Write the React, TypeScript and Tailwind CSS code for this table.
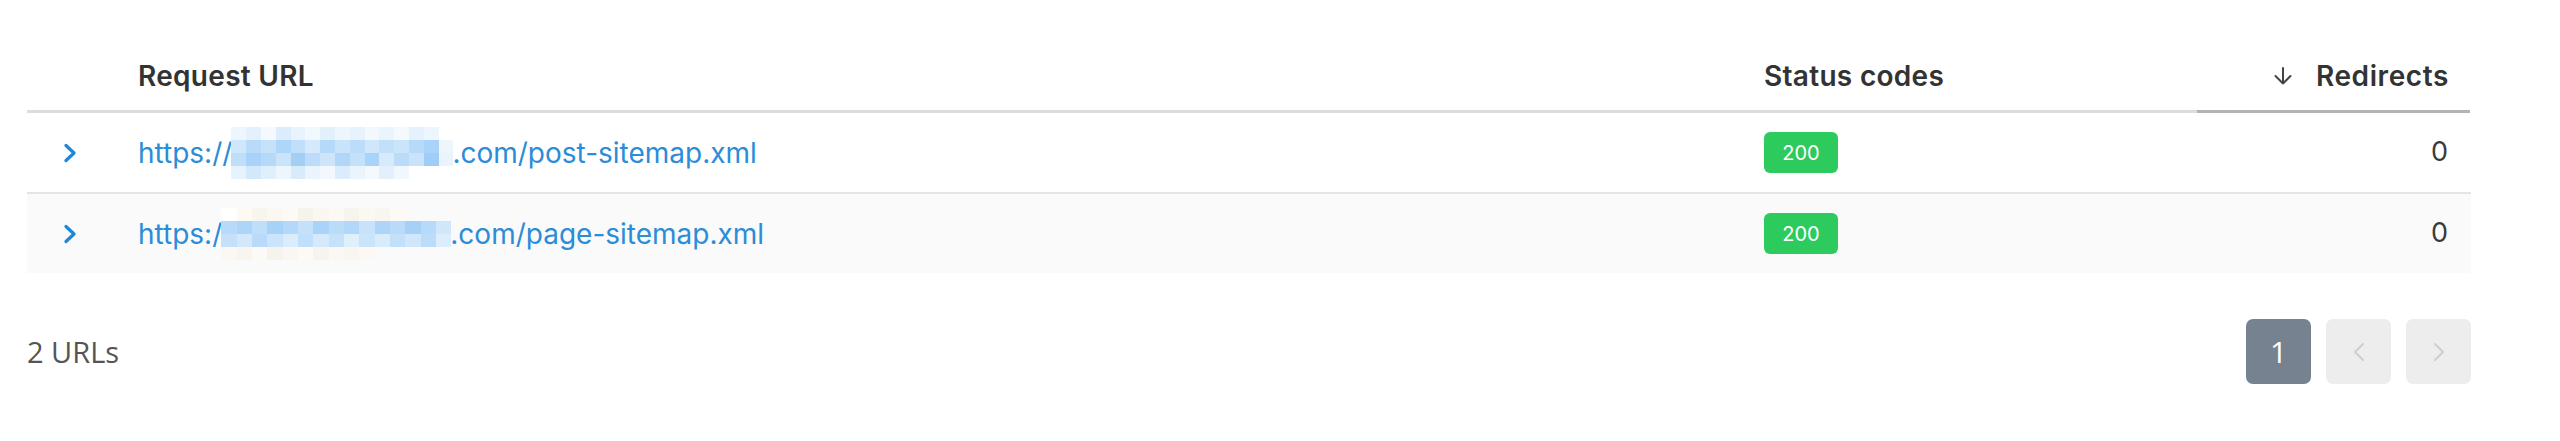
import React from "react";

const mosaic1 = [
  ["#eef6fd", "#e4f1fc", "#f3f9fe", "#dcecfb", "#e8f3fd", "#f1f8fe", "#e2f0fc", "#edf6fd", "#e6f2fc", "#f2f8fe", "#e9f4fd", "#f4f9fe", "#e5f1fc", "#eef6fd", "#ffffff"],
  ["#cfe6fb", "#b8dbf9", "#c6e1fa", "#aed6f8", "#c1dffa", "#d4e9fb", "#b4d9f9", "#c9e3fa", "#bcdcf9", "#d0e7fb", "#c3e0fa", "#cae4fa", "#b7daf9", "#a9d3f8", "#eef6fd"],
  ["#bfdefa", "#a8d2f8", "#b5d9f9", "#c8e3fa", "#a3cff7", "#bddcf9", "#cde5fb", "#b0d6f8", "#c4e1fa", "#aad3f8", "#d6eafb", "#bbdcf9", "#c9e3fa", "#9fcdf7", "#e9f4fd"],
  ["#e6f2fc", "#d2e8fb", "#e0effc", "#edf6fd", "#d8ebfb", "#e9f4fd", "#f2f8fe", "#dbedfc", "#eaf4fd", "#f4f9fe", "#e3f0fc", "#f0f7fd", "#ffffff", "#ffffff", "#ffffff"],
];

const mosaic2 = [
  ["#ffffff", "#fdf9f3", "#f8f4ee", "#fbf8f2", "#fdfaf5", "#f6f2ec", "#faf6f0", "#fcf9f4", "#f7f3ed", "#fbf8f3", "#f9f5ef", "#fdfaf6", "#fafafa", "#fafafa", "#fafafa"],
  ["#b7dafa", "#add5f9", "#bfdefa", "#a7d2f8", "#b3d8f9", "#c4e1fa", "#a9d3f8", "#bbdcf9", "#b1d7f9", "#c7e2fa", "#aed5f8", "#b9dbf9", "#a5d1f8", "#b6daf9", "#cfe6fb"],
  ["#c5e1fa", "#d3e8fb", "#b9dbf9", "#cbe4fa", "#dbedfc", "#c0dffa", "#d5e9fb", "#c6e2fa", "#dfeffc", "#cae4fa", "#d9ecfb", "#c2e0fa", "#d0e7fb", "#bddcf9", "#dcedfc"],
  ["#fbf8f3", "#f8f4ee", "#fcfaf6", "#f6f2ec", "#faf6f1", "#fdfaf6", "#f7f3ee", "#fbf8f3", "#f9f5f0", "#fcf9f5", "#fafafa", "#fafafa", "#fafafa", "#fafafa", "#fafafa"],
];

function Mosaic({ grid, width }: { grid: string[][]; width: number }) {
  return (
    <span
      className="inline-grid align-middle mx-[-1px]"
      style={{
        width,
        gridTemplateColumns: `repeat(${grid[0].length}, 1fr)`,
        gridTemplateRows: "repeat(4, 13px)",
      }}
    >
      {grid.flat().map((c, i) => (
        <span key={i} style={{ background: c }} />
      ))}
    </span>
  );
}

function Chevron() {
  return (
    <svg width="15" height="20" viewBox="0 0 15 20" fill="none">
      <path d="M3 2.5 L11 10 L3 17.5" stroke="#1e88d8" strokeWidth="3.3" strokeLinecap="round" strokeLinejoin="round" />
    </svg>
  );
}

function Row({
  striped,
  border,
  pre,
  post,
  grid,
  mw,
}: {
  striped?: boolean;
  border?: boolean;
  pre: string;
  post: string;
  grid: string[][];
  mw: number;
}) {
  return (
    <div
      className={`grid grid-cols-[111px_1626px_433px_273px] h-[79px] items-center ${
        striped ? "bg-[#fafafa]" : "bg-white"
      } ${border ? "border-b-2 border-[#e4e4e4] box-content" : ""}`}
    >
      <div className="pl-[36px] flex items-center">
        <Chevron />
      </div>
      <div className="text-[28px] text-[#2b8cd8] leading-[32px] whitespace-nowrap flex items-center">
        <span>{pre}</span>
        <Mosaic grid={grid} width={mw} />
        <span>{post}</span>
      </div>
      <div>
        <span className="inline-flex items-center justify-center w-[74px] h-[41px] rounded-[6px] bg-[#2dcb5e] text-white text-[20px]">
          200
        </span>
      </div>
      <div className="text-right pr-[22px] text-[27px] text-[#3a3a3a]">0</div>
    </div>
  );
}

export default function App() {
  return (
    <div className="w-[2560px] h-[441px] bg-white font-[Inter,'Liberation_Sans',sans-serif]">
      <div className="ml-[27px] w-[2444px] pt-[60px]">
        <div className="grid grid-cols-[111px_1626px_433px_273px] text-[28px] font-semibold text-[#333333] leading-[32px] tracking-[0.3px]">
          <div className="border-b-[3px] border-[#dcdcdc] pb-[18px]" />
          <div className="border-b-[3px] border-[#dcdcdc] pb-[18px]">Request URL</div>
          <div className="border-b-[3px] border-[#dcdcdc] pb-[18px]">Status codes</div>
          <div className="border-b-[3px] border-[#b3b3b3] pb-[18px] pr-[21px] flex items-center justify-end gap-[22px]">
            <svg width="22" height="18" viewBox="0 0 22 18" fill="none">
              <path d="M11 1 V16.5 M3.5 9 L11 16.5 L18.5 9" stroke="#444" strokeWidth="2" strokeLinecap="round" strokeLinejoin="round" />
            </svg>
            <span className="tracking-[0.6px]">Redirects</span>
          </div>
        </div>
        <Row border pre="https://" post=".com/post-sitemap.xml" grid={mosaic1} mw={222} />
        <Row striped pre="https:/" post=".com/page-sitemap.xml" grid={mosaic2} mw={230} />
        <div className="mt-[46px] flex items-center justify-between">
          <span className="text-[29px] text-[#555555] font-['Open_Sans',sans-serif]">2 URLs</span>
          <div className="flex gap-[15px]">
            <div className="w-[65px] h-[65px] rounded-[7px] bg-[#778291] flex items-center justify-center text-white text-[30px] font-['Open_Sans',sans-serif]">
              1
            </div>
            <div className="w-[65px] h-[65px] rounded-[7px] bg-[#ededed] flex items-center justify-center">
              <svg width="14" height="20" viewBox="0 0 14 20" fill="none">
                <path d="M11 2 L3 10 L11 18" stroke="#cfcfcf" strokeWidth="2" strokeLinecap="round" strokeLinejoin="round" />
              </svg>
            </div>
            <div className="w-[65px] h-[65px] rounded-[7px] bg-[#ededed] flex items-center justify-center">
              <svg width="14" height="20" viewBox="0 0 14 20" fill="none">
                <path d="M3 2 L11 10 L3 18" stroke="#cfcfcf" strokeWidth="2" strokeLinecap="round" strokeLinejoin="round" />
              </svg>
            </div>
          </div>
        </div>
      </div>
    </div>
  );
}
